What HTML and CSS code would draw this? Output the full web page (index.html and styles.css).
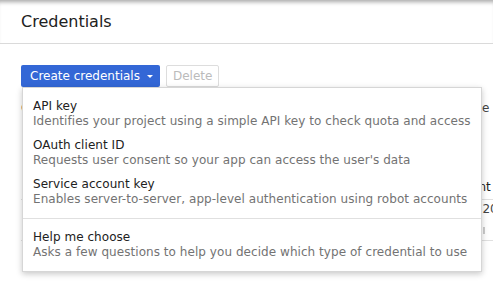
FILE: index.html
```html
<!DOCTYPE html>
<html lang="en">
<head>
  <meta charset="UTF-8">
  <meta name="viewport" content="width=device-width, initial-scale=1.0">
  <title>Credentials</title>
  <link rel="stylesheet" href="styles.css">
</head>
<body>
  <div class="page-header">
    <div class="page-title">Credentials</div>
  </div>

  <div class="toolbar">
    <button class="btn-primary">Create credentials <span class="caret"></span></button>
    <button class="btn-plain" disabled>Delete</button>

    <div class="menu">
      <div class="menu-item">
        <div class="item-title">API key</div>
        <div class="item-desc">Identifies your project using a simple API key to check quota and access</div>
      </div>
      <div class="menu-item">
        <div class="item-title">OAuth client ID</div>
        <div class="item-desc">Requests user consent so your app can access the user's data</div>
      </div>
      <div class="menu-item">
        <div class="item-title">Service account key</div>
        <div class="item-desc">Enables server-to-server, app-level authentication using robot accounts</div>
      </div>
      <div class="menu-sep"></div>
      <div class="menu-item">
        <div class="item-title">Help me choose</div>
        <div class="item-desc">Asks a few questions to help you decide which type of credential to use</div>
      </div>
    </div>
  </div>

  <div class="content">
    <div class="intro">
      <div class="intro-main">Create credentials to access your enabled APIs.</div>
      <div class="intro-end">these</div>
    </div>
    <table class="keys">
      <tr>
        <th class="col-name">OAuth 2.0 client IDs</th>
        <th class="col-date">Client</th>
      </tr>
      <tr>
        <td class="col-name">Web client 1</td>
        <td class="col-date">Sep 20, 2016<div class="row-mark"></div></td>
      </tr>
    </table>
  </div>
</body>
</html>
```

FILE: styles.css
```css
html { overflow: hidden; }
body { margin: 0; min-height: 294px; font-family: "DejaVu Sans", Verdana, sans-serif; font-size: 12px; color: #212121; background: #fff; }

.page-header { height: 31px; padding: 12px 0 0 21px; border-bottom: 1px solid #dadada; box-shadow: inset 0 5px 4px -3px rgba(0,0,0,0.35); }
.page-title { font-size: 16px; line-height: 19px; color: #212121; }

.toolbar { position: relative; display: flex; gap: 6px; margin: 21px 0 0 21px; }
.btn-primary { display: flex; align-items: center; gap: 7px; height: 22px; padding: 0 7px 0 9px; background: #3367d6; color: #fff; border: none; border-radius: 2px; font: 12px/22px "DejaVu Sans", sans-serif; }
.caret { width: 0; height: 0; border-left: 3px solid transparent; border-right: 3px solid transparent; border-top: 3px solid #fff; }
.btn-plain { height: 22px; padding: 0 6px; background: #fff; color: #bbb; border: 1px solid #ddd; border-radius: 2px; font: 12px/20px "DejaVu Sans", sans-serif; }

.menu { position: absolute; top: 22px; left: 1px; z-index: 2; width: 458px; padding: 7px 0 6px; background: #fff; border: 1px solid #d6d6d6; box-shadow: 0 2px 6px rgba(0,0,0,0.22); }
.menu-item { padding: 4px 10px 5px; line-height: 15px; white-space: nowrap; letter-spacing: 0.05px; }
.item-title { color: #212121; }
.item-desc { color: #737373; }
.menu-sep { height: 1px; margin: 6px 0 7px; background: #e0e0e0; }

.content { padding-left: 21px; }
.intro { display: flex; margin-top: 12px; line-height: 18px; white-space: nowrap; color: #444; }
.intro-main { width: 435px; overflow: hidden; }
.keys { width: 560px; margin-top: 53px; border-collapse: collapse; table-layout: fixed; white-space: nowrap; }
.keys th { padding: 8px 0 3px; line-height: 18px; text-align: left; font-weight: normal; color: #212121; border-bottom: 1px solid #e0e0e0; }
.keys td { height: 39px; padding: 1px 0 0; line-height: 16px; vertical-align: top; color: #444; border-bottom: 1px solid #e0e0e0; }
.keys .col-name { width: 431px; padding-left: 4px; }
.row-mark { width: 2px; height: 7px; margin: 10px 0 0 27px; background: #ccc; }
```
